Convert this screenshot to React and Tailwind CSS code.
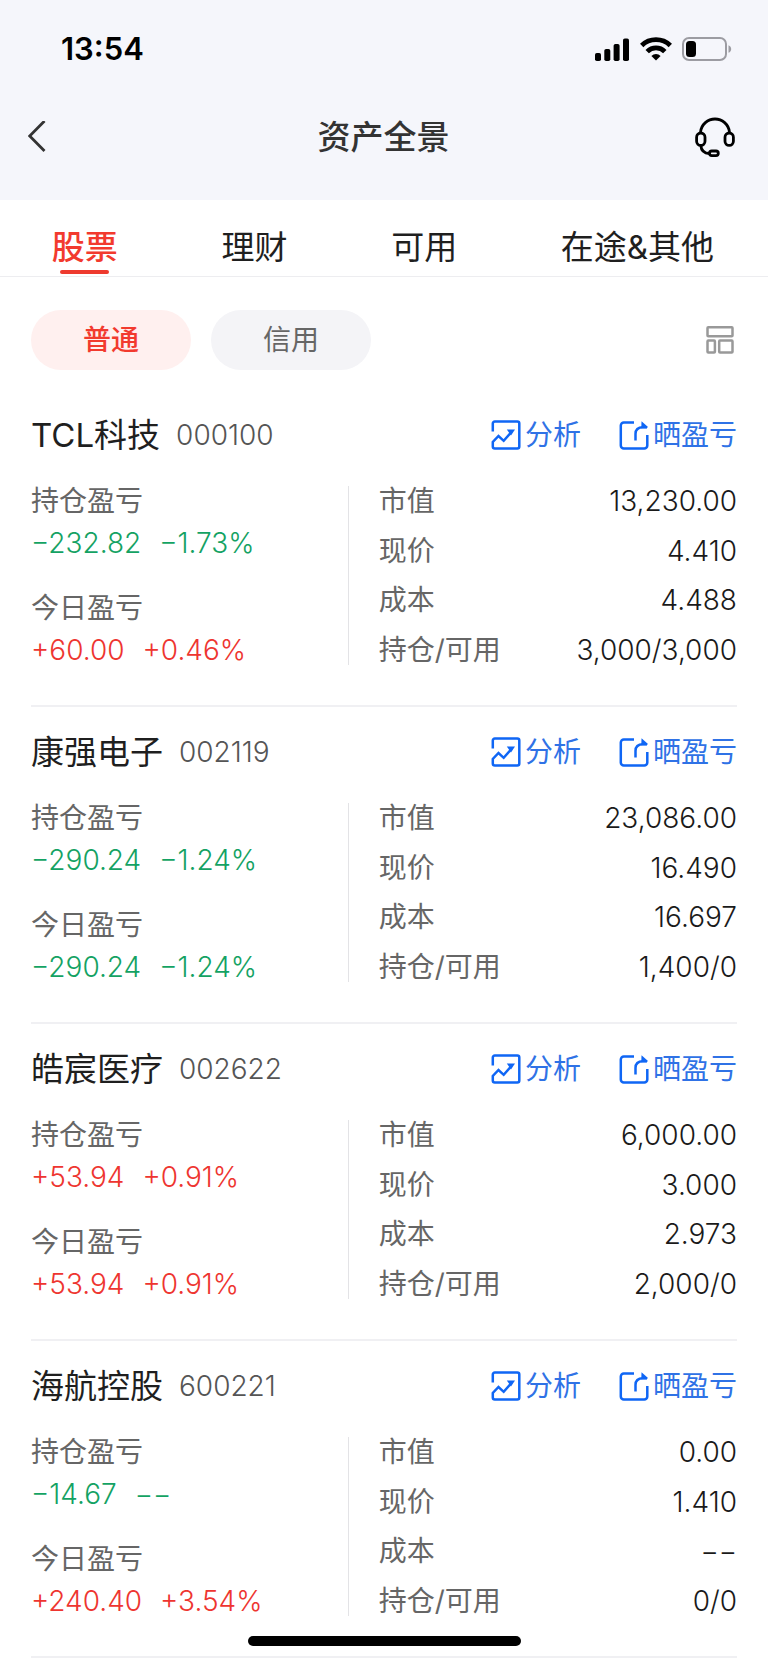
import { useState } from 'react'
import clsx from 'clsx'

const tabs = ['股票', '理财', '可用', '在途&其他']

const accounts = ['普通', '信用']

const holdings = [
  {
    name: 'TCL科技',
    code: '000100',
    total: ['−232.82', '−1.73%'],
    today: ['+60.00', '+0.46%'],
    marketValue: '13,230.00',
    price: '4.410',
    cost: '4.488',
    position: '3,000/3,000',
  },
  {
    name: '康强电子',
    code: '002119',
    total: ['−290.24', '−1.24%'],
    today: ['−290.24', '−1.24%'],
    marketValue: '23,086.00',
    price: '16.490',
    cost: '16.697',
    position: '1,400/0',
  },
  {
    name: '皓宸医疗',
    code: '002622',
    total: ['+53.94', '+0.91%'],
    today: ['+53.94', '+0.91%'],
    marketValue: '6,000.00',
    price: '3.000',
    cost: '2.973',
    position: '2,000/0',
  },
  {
    name: '海航控股',
    code: '600221',
    total: ['−14.67', '−−'],
    today: ['+240.40', '+3.54%'],
    marketValue: '0.00',
    price: '1.410',
    cost: '−−',
    position: '0/0',
  },
]

function StatusBar() {
  return (
    <div className="flex h-[98px] items-center justify-between pl-[61px] pr-9 text-black">
      <span className="text-[31px] leading-9 font-semibold">13:54</span>
      <div className="flex items-center gap-[10px]">
        <svg width="35" height="24" viewBox="0 0 35 24" fill="currentColor" aria-hidden="true">
          <rect x="0" y="16" width="6" height="8" rx="1.8" />
          <rect x="9.3" y="12" width="6" height="12" rx="1.8" />
          <rect x="18.6" y="7" width="6" height="17" rx="1.8" />
          <rect x="28" y="1.5" width="6" height="22.5" rx="1.8" />
        </svg>
        <svg width="32" height="24" viewBox="0 0 32 24" aria-hidden="true">
          <g fill="none" stroke="currentColor" strokeWidth="4.8">
            <path d="M1.7 8.4a20.6 20.6 0 0 1 28.6 0" />
            <path d="M7.2 14.6a12.4 12.4 0 0 1 17.6 0" />
          </g>
          <path d="M16 23.6l-4.6-4.7a6.5 6.5 0 0 1 9.2 0z" fill="currentColor" />
        </svg>
        <svg width="50" height="24" viewBox="0 0 50 24" aria-hidden="true">
          <rect x="1" y="1" width="43" height="22" rx="6" fill="none" stroke="#9c9ca2" strokeWidth="2" />
          <rect x="4" y="4" width="10" height="16" rx="3.5" fill="currentColor" />
          <path d="M46.5 8.2c3.6 1.4 3.6 6.2 0 7.6z" fill="#9c9ca2" />
        </svg>
      </div>
    </div>
  )
}

function HeadsetIcon() {
  return (
    <svg width="40" height="42" viewBox="0 0 40 42" fill="none" stroke="currentColor" strokeWidth="2.8" aria-hidden="true">
      <path d="M5.6 17v-1.2a14.5 14.5 0 0 1 28.800 0V17" />
      <rect x="1.600" y="17" width="8.400" height="12.400" rx="4.200" />
      <rect x="30" y="17" width="8.400" height="12.400" rx="4.200" />
      <path d="M5.800 29.300c.4 5 3.600 8 8.600 8.200" />
      <rect x="14.500" y="35" width="8.800" height="4.600" rx="2.300" />
    </svg>
  )
}

function LayoutIcon() {
  return (
    <svg width="28" height="28" viewBox="0 0 28 28" fill="none" stroke="#999" strokeWidth="2.5" aria-hidden="true">
      <rect x="1.5" y="1.3" width="25" height="9" rx="0.8" />
      <rect x="1.5" y="14.6" width="7.4" height="12" rx="0.8" />
      <rect x="13.2" y="14.6" width="13.3" height="12" rx="0.8" />
    </svg>
  )
}

function AnalysisIcon() {
  return (
    <svg width="30" height="30" viewBox="0 0 30 30" fill="none" stroke="#0f66f5" strokeWidth="2.5" aria-hidden="true">
      <path d="M1.8 11.5V3.5a2 2 0 0 1 2-2h22.5a2 2 0 0 1 2 2v23a2 2 0 0 1-2 2H3.8a2 2 0 0 1-2-2v-4.5l5.7-6 5.2 4.8L20 12.5" />
      <path d="M15.8 9.5h8.2l-4 6z" fill="#0f66f5" stroke="none" />
    </svg>
  )
}

function ShareIcon() {
  return (
    <svg width="30" height="30" viewBox="0 0 30 30" fill="none" stroke="#0f66f5" strokeWidth="2.5" aria-hidden="true">
      <path d="M15 2.5H4.8a3 3 0 0 0-3 3v20a3 3 0 0 0 3 3h20.5a3 3 0 0 0 3-3V15" />
      <path d="M16.5 20.5v-6.5c0-4.5 2.5-6.8 7.5-6.8h4" />
      <path d="M22.5 1.2l6.5 5.8-1.5 1.2h-5.2z" fill="#0f66f5" stroke="none" />
    </svg>
  )
}

function Profit({ label, values }) {
  // 红涨绿跌
  const color = values[0].startsWith('+') ? 'text-[#ee3530]' : 'text-[#14a263]'

  return (
    <div className="flex flex-col gap-3">
      <dt className="text-[#666]">{label}</dt>
      <dd className={clsx('flex gap-[18px] font-[350]', color)}>
        {values.map((value, i) => (
          <span key={i}>{value}</span>
        ))}
      </dd>
    </div>
  )
}

function Detail({ label, value }) {
  return (
    <div className="flex justify-between">
      <dt className="text-[#666]">{label}</dt>
      <dd className="font-[350] text-[#1a1a1a]">{value}</dd>
    </div>
  )
}

function Holding({ item }) {
  return (
    <article className="border-b-2 border-[#f0f0f3] pt-[21px] pb-10">
      <div className="flex h-12 items-center justify-between">
        <div className="flex items-center gap-4">
          <h2 className="text-[33px] leading-12 text-[#1f1f1f]">{item.name}</h2>
          <span className="text-[28px] leading-8 font-light text-[#555]">{item.code}</span>
        </div>
        <div className="flex gap-[38px] text-[28px] leading-[30px] text-[#2f72e6]">
          <button type="button" className="flex items-center gap-1">
            <AnalysisIcon />
            分析
          </button>
          <button type="button" className="flex items-center gap-1">
            <ShareIcon />
            晒盈亏
          </button>
        </div>
      </div>

      <div className="mt-[27px] flex h-[179px] text-[28px] leading-[30px]">
        <dl className="flex w-[45%] flex-col justify-between border-r border-[#e3e3e6]">
          <Profit label="持仓盈亏" values={item.total} />
          <Profit label="今日盈亏" values={item.today} />
        </dl>
        <dl className="flex flex-1 flex-col justify-between pl-[30px]">
          <Detail label="市值" value={item.marketValue} />
          <Detail label="现价" value={item.price} />
          <Detail label="成本" value={item.cost} />
          <Detail label="持仓/可用" value={item.position} />
        </dl>
      </div>
    </article>
  )
}

function App() {
  const [tab, setTab] = useState('股票')
  const [account, setAccount] = useState('普通')

  return (
    <div className="min-h-screen bg-white font-['Inter','Noto_Sans_CJK_SC',sans-serif]">
      <header className="h-[200px] bg-[#f5f6fb]">
        <StatusBar />
        <div className="flex h-[78px] items-center justify-between pl-7 pr-[33px]">
          <button type="button" aria-label="返回" className="flex w-11 text-[#333]">
            <svg width="18" height="32" viewBox="0 0 18 32" fill="none" stroke="currentColor" strokeWidth="2.8" aria-hidden="true">
              <path d="M16.5 0L1.7 15l14.8 15" />
            </svg>
          </button>
          <h1 className="text-[33px] leading-12 font-medium text-[#333]">资产全景</h1>
          <button type="button" aria-label="客服" className="text-black">
            <HeadsetIcon />
          </button>
        </div>
      </header>

      <nav className="flex h-[77px] justify-around border-b border-[#ededf0] pr-[2px]">
        {tabs.map((name) => (
          <button
            key={name}
            type="button"
            onClick={() => setTab(name)}
            className={clsx(
              'relative flex h-full items-center pt-[18px] text-[33px] leading-12',
              tab === name ? 'font-medium text-[#f23a2e]' : 'text-[#1f1f1f]'
            )}
          >
            {name}
            {tab === name && (
              <span className="absolute inset-x-0 bottom-[2px] mx-auto h-1 w-[49px] rounded-full bg-[#ee3a2e]" />
            )}
          </button>
        ))}
      </nav>

      <main className="px-[31px]">
        <div className="flex h-[113px] items-center justify-between pt-3">
          <div className="flex gap-5">
            {accounts.map((name) => (
              <button
                key={name}
                type="button"
                onClick={() => setAccount(name)}
                className={clsx(
                  'h-[60px] w-40 rounded-full text-[28px] leading-[30px]',
                  account === name
                    ? 'bg-[#fff0ef] font-medium text-[#f23a2e]'
                    : 'bg-[#f4f4f7] text-[#666]'
                )}
              >
                {name}
              </button>
            ))}
          </div>
          <button type="button" aria-label="切换布局" className="mr-[3px]">
            <LayoutIcon />
          </button>
        </div>

        {holdings.map((item) => (
          <Holding key={item.code} item={item} />
        ))}
      </main>

      <div className="fixed inset-x-0 bottom-[17px] mx-auto h-[10px] w-[273px] rounded-full bg-black" />
    </div>
  )
}

export default App
